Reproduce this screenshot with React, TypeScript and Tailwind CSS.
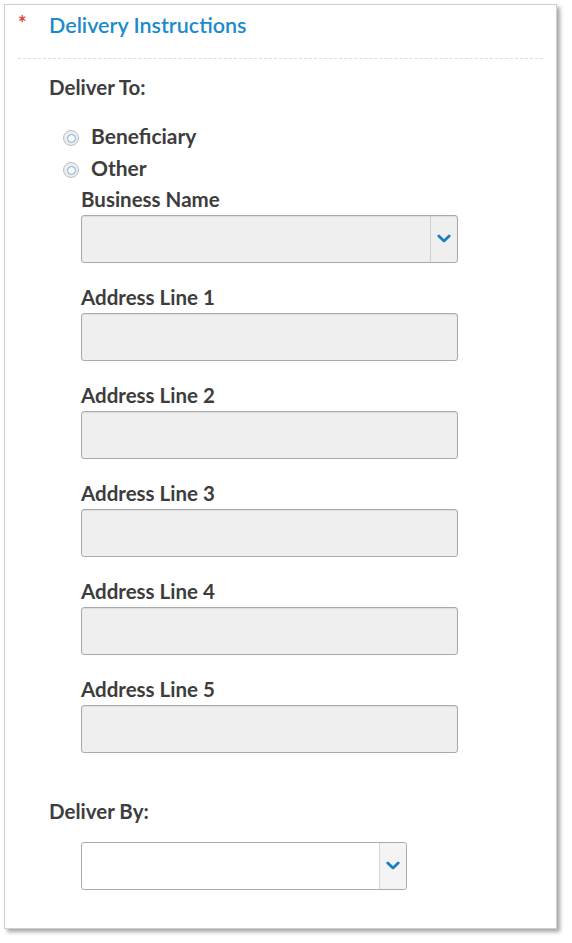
import React from 'react';

const font = { fontFamily: 'Lato, "Noto Sans", sans-serif' };

const Chevron = () => (
  <svg width="14" height="10" viewBox="0 0 14 10" fill="none">
    <path d="M1.8 2 L7 7 L12.2 2" stroke="#1a7fc1" strokeWidth="2.8" strokeLinecap="round" strokeLinejoin="round" />
  </svg>
);

const Radio = ({ label }: { label: string }) => (
  <div className="flex items-center h-[32px]">
    <span className="mt-[6px] w-[16px] h-[16px] rounded-full border border-[#bdbdbd] bg-[#ededed] flex items-center justify-center ml-[14px]">
      <span className="w-[9px] h-[9px] rounded-full border-[1.5px] border-[#7fb0cc] bg-[#f8fbfd]" />
    </span>
    <span className="ml-[12px] text-[21px] font-bold text-[#3d3d3d] leading-none">{label}</span>
  </div>
);

const Field = ({ label, first }: { label: string; first?: boolean }) => (
  <div className={first ? '' : 'mt-[22px]'}>
    <div className="h-[24px] leading-[24px] text-[20.5px] font-bold text-[#3d3d3d]">{label}</div>
    <div className="mt-[4px] w-[377px] h-[48px] rounded-[3px] border border-[#a9a9a9] bg-[#efefef] shadow-[inset_0_1px_1px_rgba(0,0,0,0.08)]" />
  </div>
);

export default function App() {
  return (
    <div className="min-h-screen bg-white pt-[4px] pl-[4px]" style={font}>
      <div className="w-[553px] h-[925px] border border-[#cfcfcf] bg-white shadow-[3px_3px_4px_rgba(0,0,0,0.35)]">
        <div className="flex items-center h-[24px] mt-[8px]">
          <span className="ml-[13px] w-[31px] text-[#e23b3b] text-[20px] font-bold leading-none -mt-[4px]">*</span>
          <span className="text-[21.5px] font-semibold text-[#1b8bcb]">Delivery Instructions</span>
        </div>
        <div className="mx-[13px] mt-[21px] border-t border-dashed border-[#dcdcdc]" />
        <div className="pl-[44px]">
          <div className="mt-[16px] h-[24px] leading-[24px] text-[20.5px] font-bold text-[#3d3d3d]">Deliver To:</div>
          <div className="mt-[20px]">
            <Radio label="Beneficiary" />
            <Radio label="Other" />
          </div>
          <div className="pl-[32px] mt-[4px]">
            <div className="h-[24px] leading-[24px] text-[20.5px] font-bold text-[#3d3d3d]">Business Name</div>
            <div className="mt-[4px] w-[377px] h-[48px] rounded-[3px] border border-[#a9a9a9] bg-[#efefef] flex shadow-[inset_0_1px_1px_rgba(0,0,0,0.08)]">
              <div className="flex-1" />
              <div className="w-[27px] border-l border-[#cfcfcf] flex items-center justify-center">
                <Chevron />
              </div>
            </div>
            <div className="mt-[22px]">
              <Field label="Address Line 1" first />
              <Field label="Address Line 2" />
              <Field label="Address Line 3" />
              <Field label="Address Line 4" />
              <Field label="Address Line 5" />
            </div>
          </div>
          <div className="mt-[46px] h-[24px] leading-[24px] text-[20.5px] font-bold text-[#3d3d3d]">Deliver By:</div>
          <div className="ml-[32px] mt-[19px] w-[326px] h-[48px] rounded-[3px] border border-[#a9a9a9] bg-white flex">
            <div className="flex-1" />
            <div className="w-[27px] border-l border-[#d6d6d6] bg-[#f4f4f4] rounded-r-[3px] flex items-center justify-center">
              <Chevron />
            </div>
          </div>
        </div>
      </div>
    </div>
  );
}
